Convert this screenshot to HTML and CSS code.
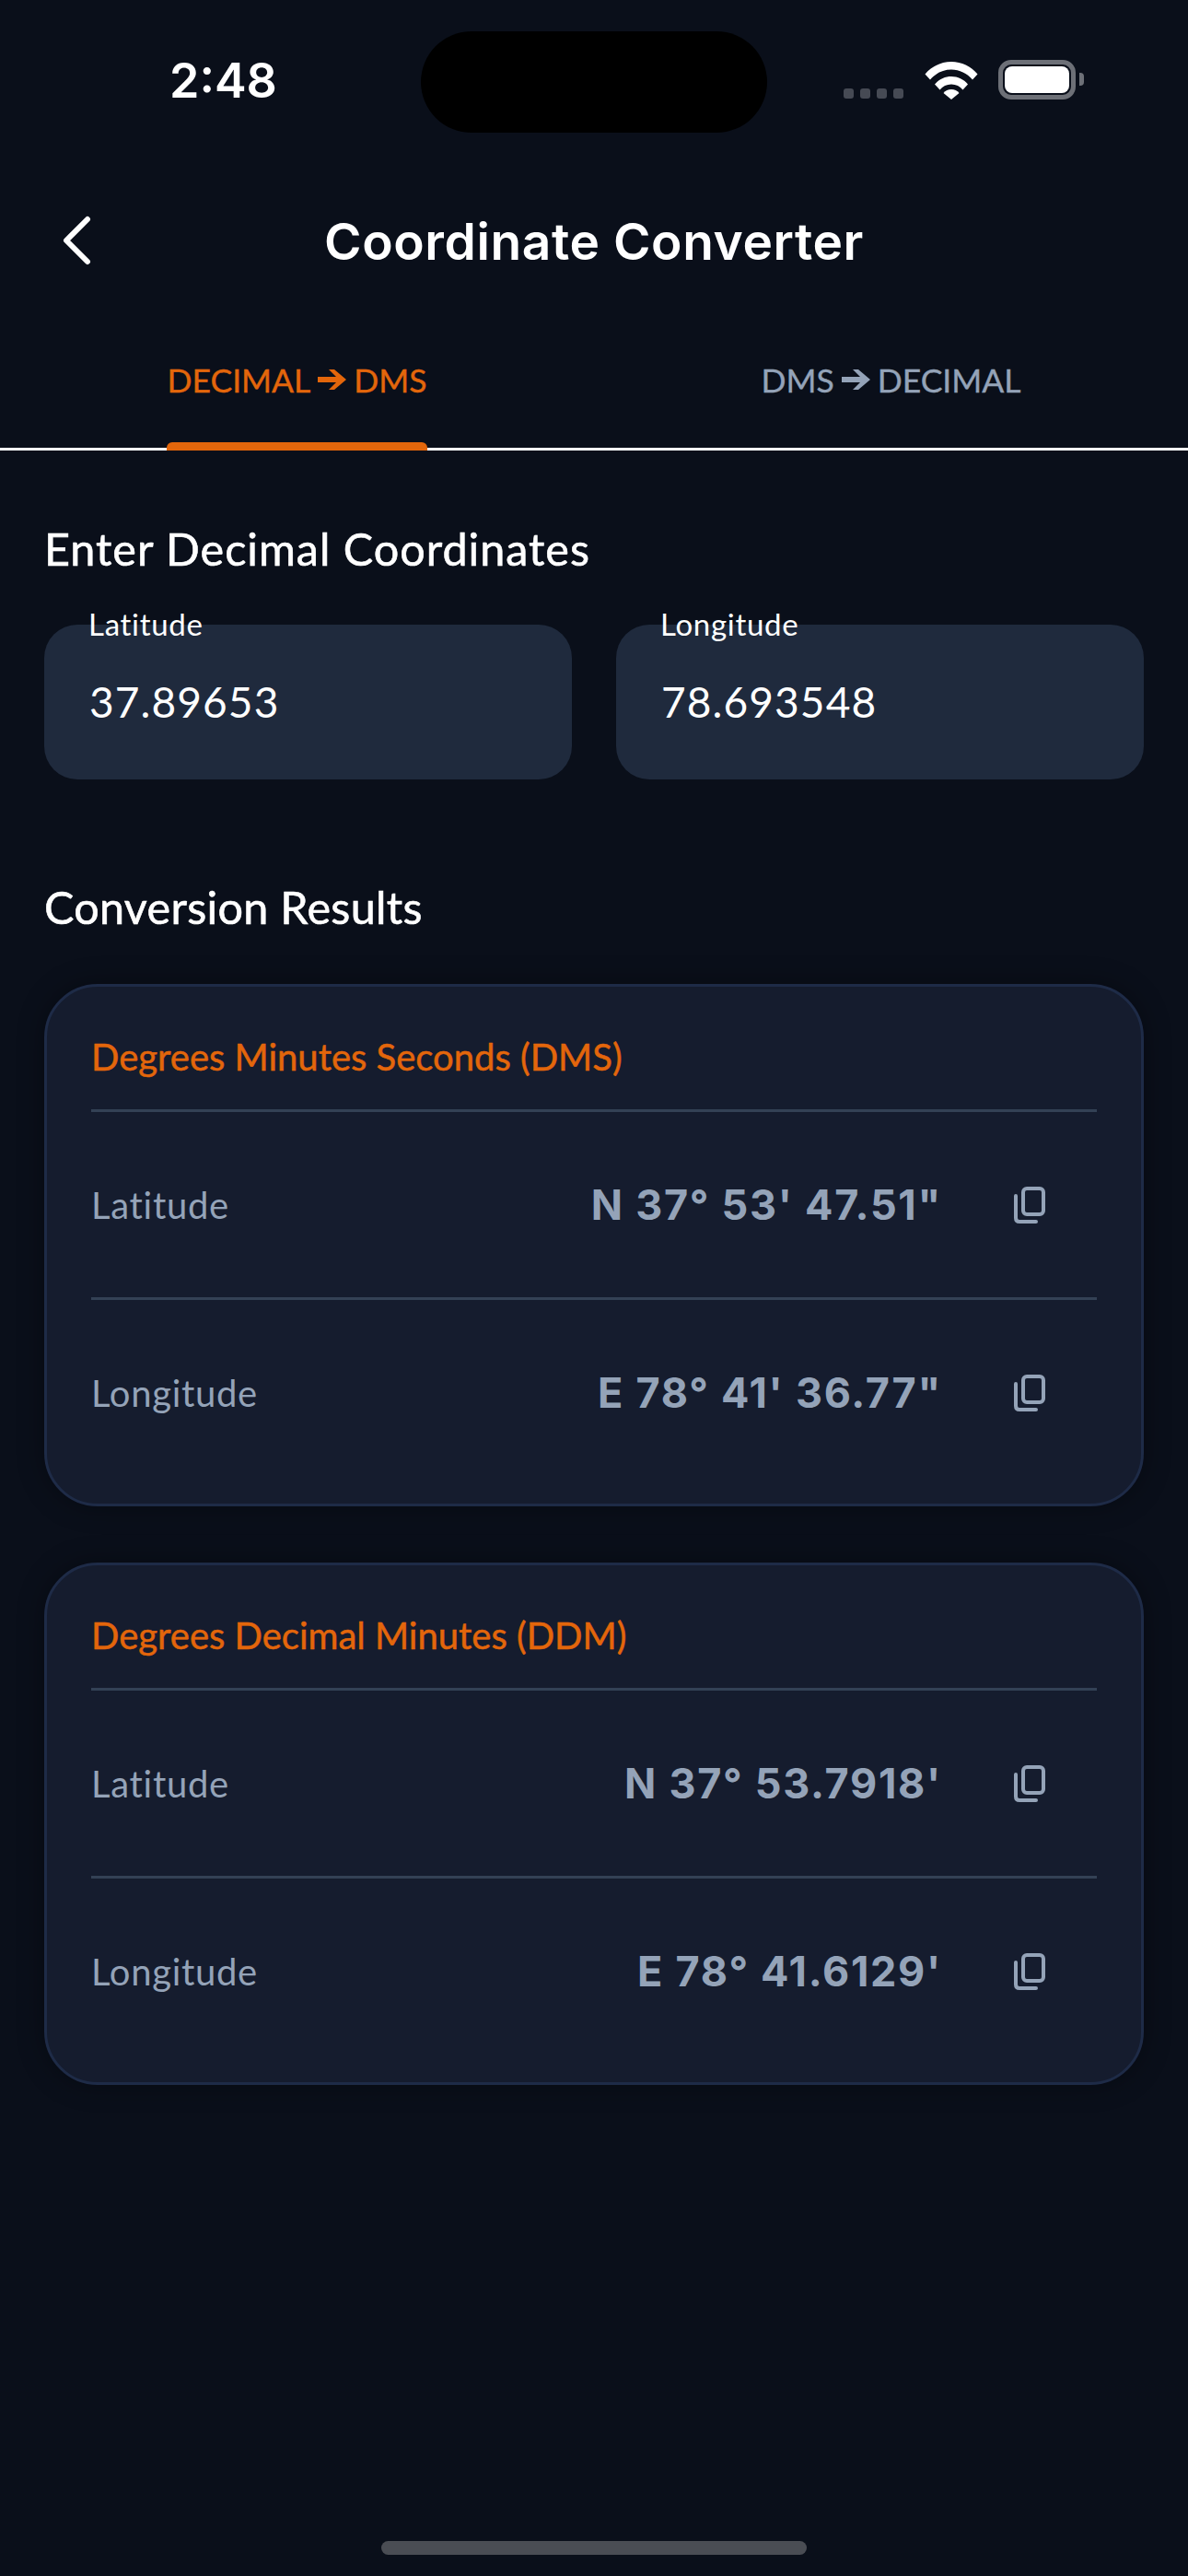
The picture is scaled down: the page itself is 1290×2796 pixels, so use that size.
FILE: index.html
```html
<!DOCTYPE html>
<html lang="en">
<head>
  <meta charset="UTF-8">
  <title>Coordinate Converter</title>
  <link rel="stylesheet" href="styles.css">
</head>
<body>
  <div class="status-bar">
    <span class="time">2:48</span>
    <div class="island"></div>
    <div class="status-icons">
      <div class="signal"><i></i><i></i><i></i><i></i></div>
      <svg class="wifi" width="58" height="42" viewBox="0 0 58 42">
        <path d="M0.5 14.5C7.500 6 18 1 29 1s21.500 5 28.500 13.500l-5.500 6C46 13.500 38 9.500 29 9.500S12 13.500 6 20.500z" fill="#fff"/>
        <path d="M11 25.500C15.500 20 22 17 29 17s13.500 3 18 8.500l-5.500 6C38.500 27.500 34 25.500 29 25.500s-9.500 2-12.500 6z" fill="#fff"/>
        <path d="M20.500 35C22.500 32.500 25.500 31 29 31s6.500 1.500 8.500 4L29 42z" fill="#fff"/>
      </svg>
      <div class="battery"><div class="battery-fill"></div></div>
      <div class="battery-cap"></div>
    </div>
  </div>

  <header class="nav">
    <svg class="back" width="34" height="56" viewBox="0 0 34 56">
      <path d="M29 4L6 27l23 23" fill="none" stroke="#fff" stroke-width="6" stroke-linecap="round" stroke-linejoin="round"/>
    </svg>
    <h1>Coordinate Converter</h1>
  </header>

  <nav class="tabs">
    <div class="tab active">
      <span class="tab-label">DECIMAL
        <svg class="arrow" viewBox="0 0 31 22"><path d="M0 8h20L12 0h6l13 11-13 11h-6l8-8H0z"/></svg>
        DMS</span>
    </div>
    <div class="tab">
      <span class="tab-label">DMS
        <svg class="arrow" viewBox="0 0 31 22"><path d="M0 8h20L12 0h6l13 11-13 11h-6l8-8H0z"/></svg>
        DECIMAL</span>
    </div>
  </nav>

  <main class="content">
    <h2 class="section-title">Enter Decimal Coordinates</h2>
    <div class="fields">
      <div class="field"><label class="field-label">Latitude</label><span class="field-value">37.89653</span></div>
      <div class="field"><label class="field-label">Longitude</label><span class="field-value">78.693548</span></div>
    </div>

    <h2 class="section-title results-title">Conversion Results</h2>

    <section class="card">
      <h3 class="card-title">Degrees Minutes Seconds (DMS)</h3>
      <div class="row">
        <span class="row-label">Latitude</span>
        <span class="row-value">N 37° 53' 47.51"</span>
        <svg class="copy" viewBox="0 0 34 40"><rect x="10" y="2" width="22" height="28" rx="4"/><path d="M2 10v24q0 4 4 4h18"/></svg>
      </div>
      <div class="row">
        <span class="row-label">Longitude</span>
        <span class="row-value">E 78° 41' 36.77"</span>
        <svg class="copy" viewBox="0 0 34 40"><rect x="10" y="2" width="22" height="28" rx="4"/><path d="M2 10v24q0 4 4 4h18"/></svg>
      </div>
    </section>

    <section class="card">
      <h3 class="card-title">Degrees Decimal Minutes (DDM)</h3>
      <div class="row">
        <span class="row-label">Latitude</span>
        <span class="row-value">N 37° 53.7918'</span>
        <svg class="copy" viewBox="0 0 34 40"><rect x="10" y="2" width="22" height="28" rx="4"/><path d="M2 10v24q0 4 4 4h18"/></svg>
      </div>
      <div class="row">
        <span class="row-label">Longitude</span>
        <span class="row-value">E 78° 41.6129'</span>
        <svg class="copy" viewBox="0 0 34 40"><rect x="10" y="2" width="22" height="28" rx="4"/><path d="M2 10v24q0 4 4 4h18"/></svg>
      </div>
    </section>
  </main>

  <div class="home-indicator"></div>
</body>
</html>
```

FILE: styles.css
```css
html, body {
  margin: 0;
  padding: 0;
}
body {
  width: 1290px;
  height: 2796px;
  overflow: hidden;
  position: relative;
  background-color: #0a0f1a;
  color: #fff;
  font-family: "Lato", sans-serif;
}
h1, h2, h3 {
  margin: 0;
}

.status-bar {
  height: 176px;
  display: flex;
  justify-content: space-between;
  align-items: flex-start;
  box-sizing: border-box;
  padding: 60px 113px 0 184px;
}
.time {
  font-family: "Inter", sans-serif;
  font-size: 52px;
  font-weight: 600;
  line-height: 56px;
}
.island {
  position: absolute;
  left: 457px;
  top: 34px;
  width: 376px;
  height: 110px;
  border-radius: 55px;
  background: #000;
}
.status-icons {
  display: flex;
  align-items: flex-end;
  padding-top: 5px;
}
.signal {
  display: flex;
  gap: 7px;
  margin: 0 23px 1px 0;
}
.signal i {
  display: block;
  width: 11px;
  height: 11px;
  border-radius: 3px;
  background: #464a54;
}
.wifi {
  margin-right: 22px;
}
.battery {
  width: 84px;
  height: 43px;
  box-sizing: border-box;
  border: 5px solid #6d7077;
  border-radius: 14px;
  padding: 2px;
}
.battery-fill {
  height: 100%;
  background: #fff;
  border-radius: 8px;
}
.battery-cap {
  width: 5px;
  height: 14px;
  margin: 0 0 15px 4px;
  background: #6d7077;
  border-radius: 0 4px 4px 0;
}

.nav {
  height: 172px;
  display: flex;
  align-items: center;
  justify-content: center;
  position: relative;
}
.back {
  position: absolute;
  left: 66px;
  top: 58px;
}
.nav h1 {
  font-family: "Inter", sans-serif;
  font-size: 55px;
  font-weight: 600;
  line-height: 60px;
  letter-spacing: 0.6px;
}

.tabs {
  display: flex;
  height: 141px;
  box-sizing: border-box;
  border-bottom: 3px solid #fff;
}
.tab {
  flex: 1;
  display: flex;
  justify-content: center;
}
.tab-label {
  height: 141px;
  position: relative;
  box-sizing: border-box;
  padding-top: 43px;
  display: flex;
  align-items: flex-start;
  gap: 8px;
  font-size: 35.5px;
  line-height: 44px;
  color: #94a3b8;
  -webkit-text-stroke: 0.4px #94a3b8;
  white-space: nowrap;
}
.arrow {
  width: 31px;
  height: 22px;
  margin-top: 10px;
  fill: #94a3b8;
}
.tab.active .tab-label {
  color: #e3660b;
  -webkit-text-stroke-color: #e3660b;
}
.tab.active .arrow {
  fill: #e3660b;
}
.tab.active .tab-label::after {
  content: "";
  position: absolute;
  left: 0;
  right: 0;
  bottom: 0;
  height: 9px;
  background: #e3660b;
  border-radius: 6px 6px 0 0;
}

.content {
  padding: 78px 48px 0;
}
.section-title {
  font-size: 48.5px;
  font-weight: 400;
  line-height: 56px;
  letter-spacing: 1px;
  -webkit-text-stroke: 0.6px #fff;
}
.fields {
  display: flex;
  gap: 48px;
  margin-top: 55px;
}
.field {
  flex: 1;
  height: 168px;
  position: relative;
  box-sizing: border-box;
  padding: 55px 49px 0;
  background: #1f2a3d;
  border-radius: 36px;
}
.field-label {
  position: absolute;
  left: 48px;
  top: -19px;
  font-size: 33px;
  line-height: 36px;
  letter-spacing: 0.7px;
}
.field-value {
  font-size: 46px;
  line-height: 58px;
  letter-spacing: 1.1px;
}
.results-title {
  margin-top: 110px;
  letter-spacing: 0.3px;
}
.card {
  height: 567px;
  box-sizing: border-box;
  margin-top: 54px;
  padding: 0 48px;
  background: #151c2e;
  border: 3px solid #1e2b47;
  border-radius: 58px;
  box-shadow: 0 0 28px rgba(0, 0, 0, 0.35);
}
.results-title + .card {
  margin-top: 56px;
}
.card + .card {
  margin-top: 61px;
}
.card-title {
  height: 136px;
  box-sizing: border-box;
  padding-top: 51px;
  font-size: 40px;
  line-height: 50px;
  font-weight: 400;
  color: #e3660b;
  -webkit-text-stroke: 0.5px #e3660b;
  border-bottom: 3px solid #334155;
}
.row {
  height: 201px;
  display: flex;
  align-items: center;
  box-sizing: border-box;
}
.row + .row {
  height: 204px;
  border-top: 3px solid #334155;
}
.row-label {
  flex: 1;
  font-size: 40px;
  letter-spacing: 0.7px;
  color: #94a3b8;
}
.row-value {
  font-family: "Inter", sans-serif;
  font-size: 45px;
  font-weight: 700;
  letter-spacing: 1.7px;
  color: #94a3b8;
}
.copy {
  width: 34px;
  height: 40px;
  margin: 0 56px 0 78px;
  fill: none;
  stroke: #94a3b8;
  stroke-width: 4;
  stroke-linecap: round;
}

.home-indicator {
  position: absolute;
  left: 414px;
  top: 2758px;
  width: 462px;
  height: 15px;
  border-radius: 8px;
  background: #4a4d54;
}
```
